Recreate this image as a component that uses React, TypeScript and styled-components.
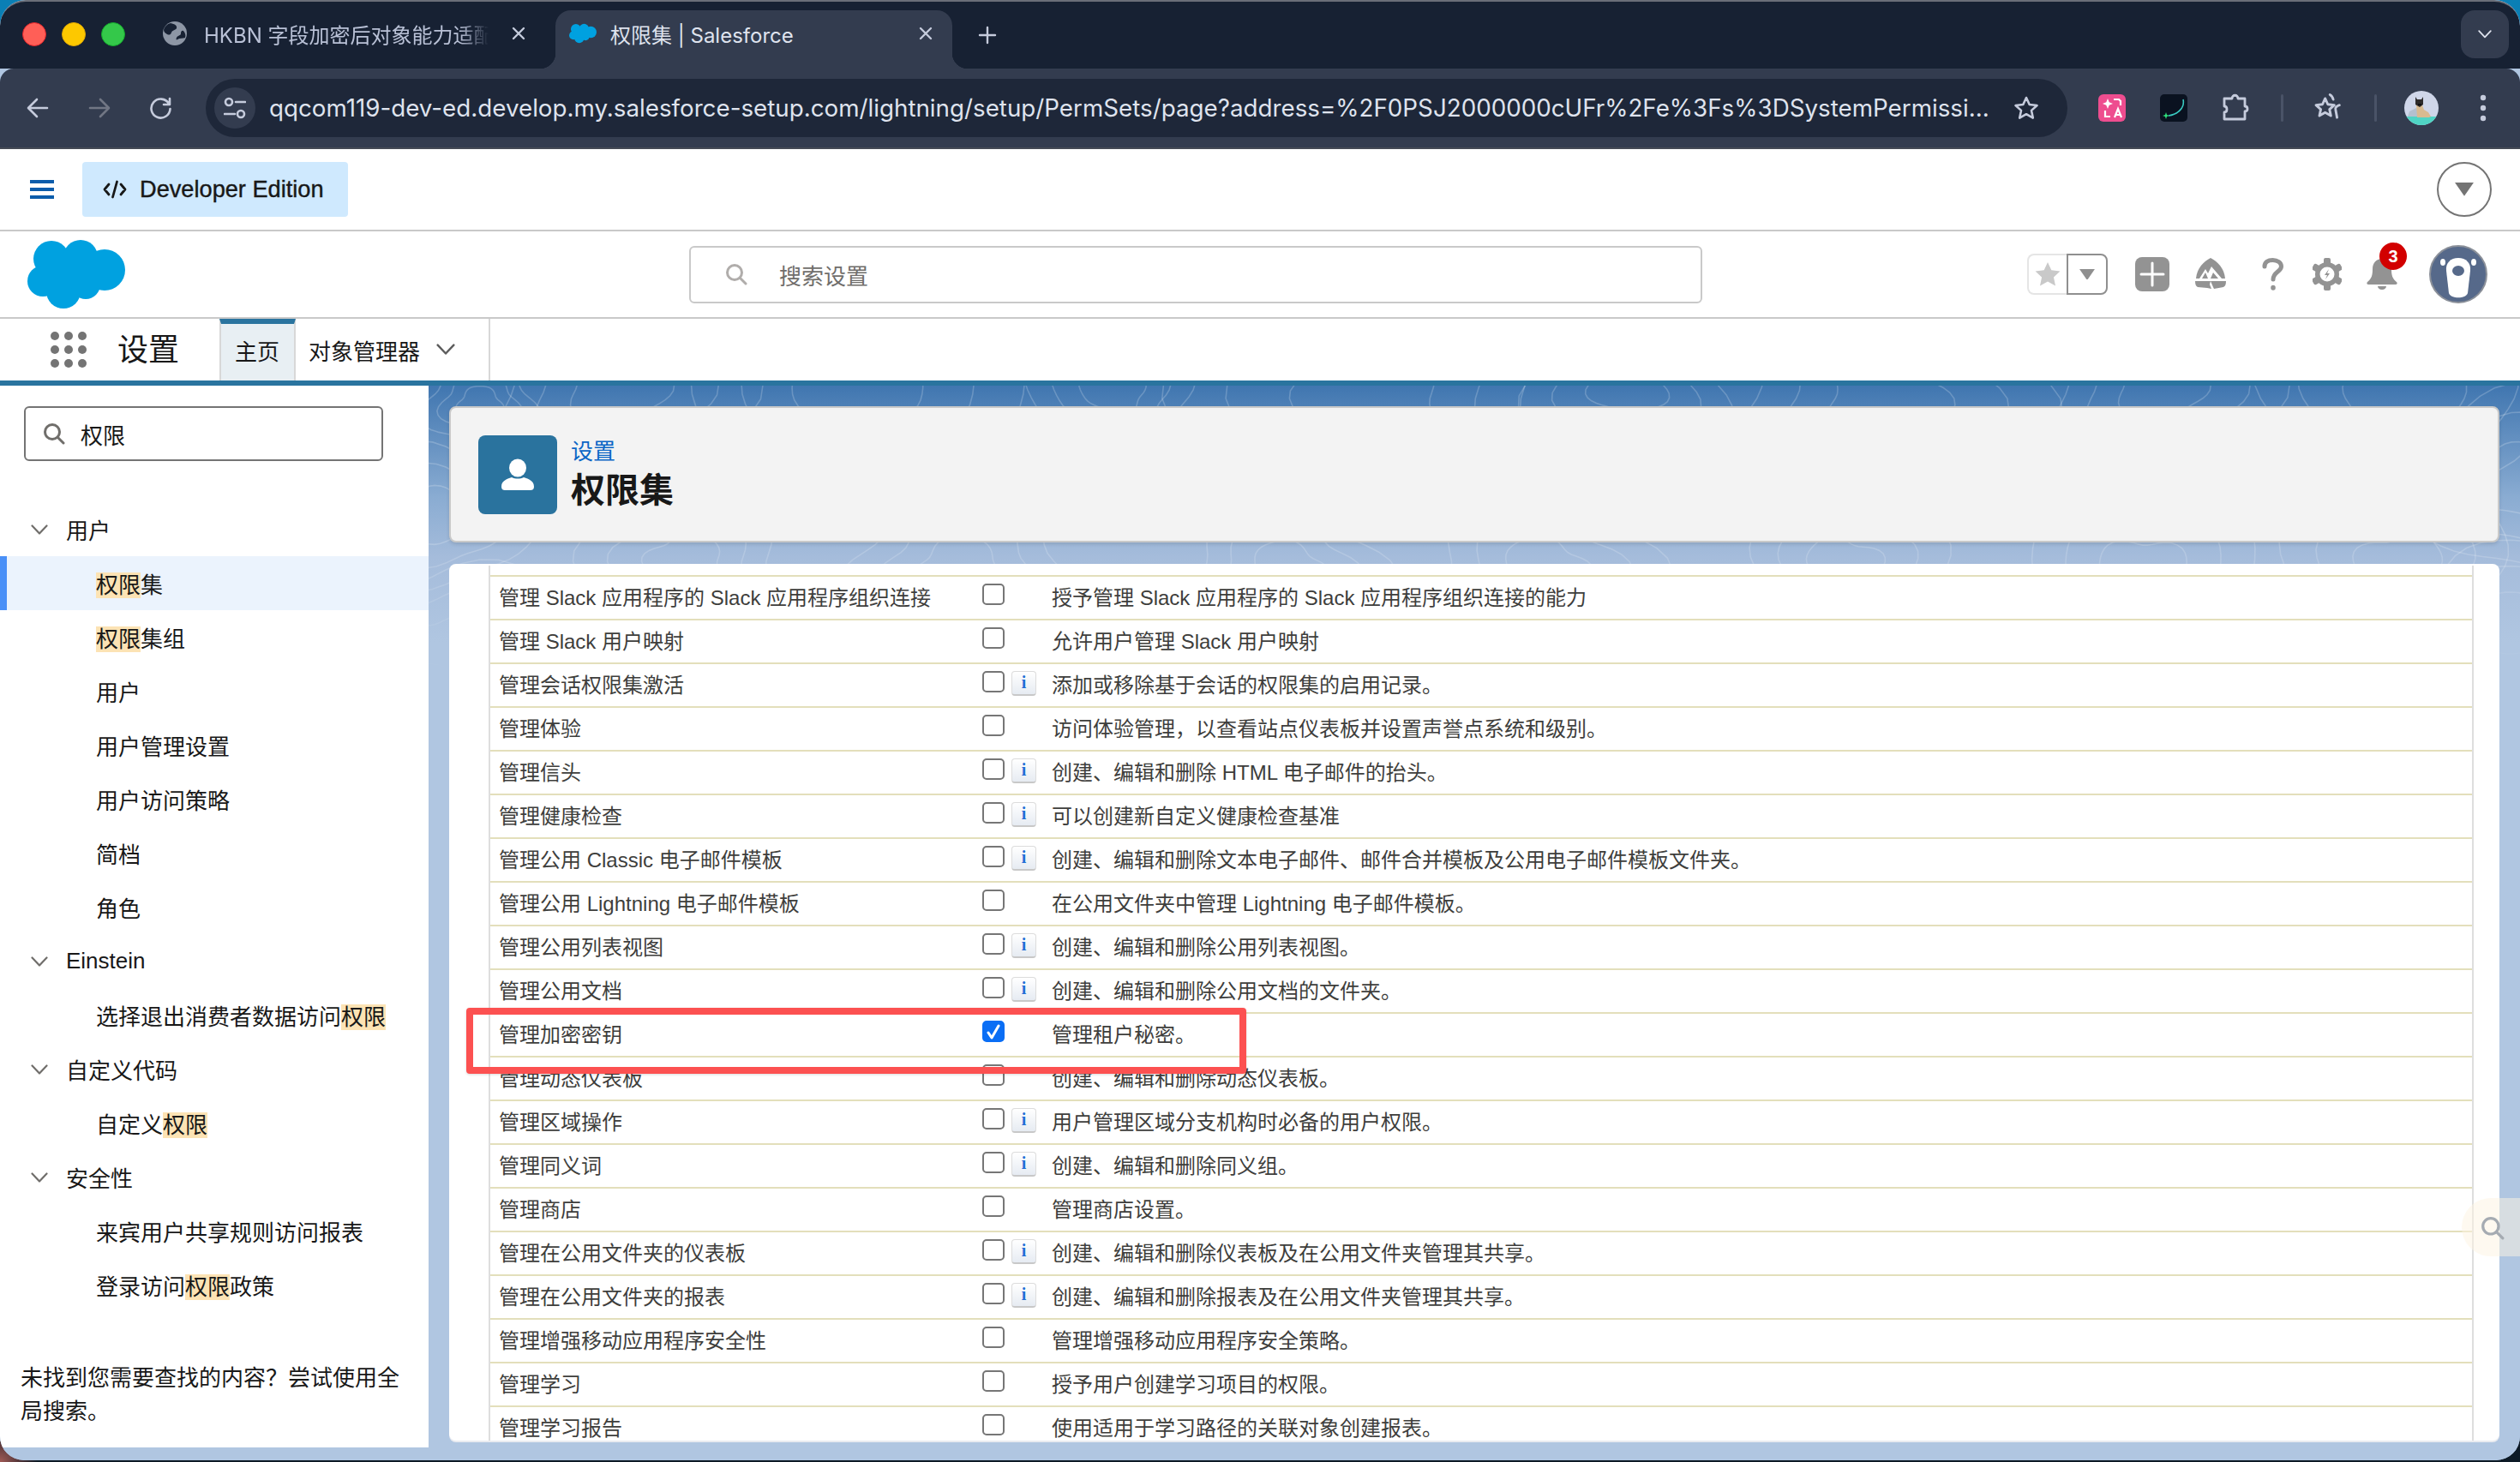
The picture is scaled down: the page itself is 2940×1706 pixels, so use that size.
import React from "react";
import styled, { createGlobalStyle } from "styled-components";

const FONT = `"Liberation Sans", "Noto Sans CJK SC", sans-serif`;
const UI_FONT = `Inter, "Noto Sans CJK SC", sans-serif`;

const Global = createGlobalStyle`
  html, body { margin: 0; padding: 0; width: 2940px; height: 1706px; overflow: hidden; }
  body {
    font-family: ${FONT};
    background:
      radial-gradient(circle at 0 0, #0a7fb5 0, #0a7fb5 30px, transparent 40px),
      radial-gradient(circle at 100% 0, #0a7fb5 0, #0a7fb5 30px, transparent 40px),
      radial-gradient(circle at 0 100%, #a05a55 0, #3a2a30 30px, transparent 44px),
      #0d1a26;
  }
  * { box-sizing: border-box; }
`;

const Window = styled.div`
  position: relative;
  width: 2940px;
  height: 1704px;
  border-radius: 30px 30px 28px 28px;
  overflow: hidden;
  display: flex;
  flex-direction: column;
  background: #b0c6e1;
`;

/* ---------- browser chrome ---------- */
const TabBar = styled.div`
  height: 80px;
  flex: none;
  display: flex;
  align-items: flex-end;
  padding-left: 26px;
  background: #172133;
  border-top: 2px solid #6a6e78;
  border-radius: 30px 30px 0 0;
`;
const Lights = styled.div`
  display: flex;
  gap: 18px;
  align-self: flex-start;
  margin-top: 24px;
`;
const Light = styled.span<{ $c: string; $b: string }>`
  width: 28px;
  height: 28px;
  border-radius: 50%;
  background: ${(p) => p.$c};
  border: 1px solid ${(p) => p.$b};
`;
const Tab = styled.div<{ $active?: boolean }>`
  position: relative;
  height: 68px;
  display: flex;
  align-items: center;
  width: ${(p) => (p.$active ? 463 : 456)}px;
  margin-left: ${(p) => (p.$active ? 18 : 28)}px;
  padding: 0 ${(p) => (p.$active ? 22 : 16)}px 14px 16px;
  border-radius: 18px 18px 0 0;
  background: ${(p) => (p.$active ? "#333c4f" : "transparent")};
  color: ${(p) => (p.$active ? "#dfe3ee" : "#b9c1d6")};
  font: 24px ${UI_FONT};
  ${(p) =>
    p.$active &&
    `
    &::before, &::after {
      content: ""; position: absolute; bottom: 0; width: 18px; height: 18px;
    }
    &::before { left: -18px; background: radial-gradient(circle at 0 0, transparent 18px, #333c4f 18.5px); }
    &::after { right: -18px; background: radial-gradient(circle at 100% 0, transparent 18px, #333c4f 18.5px); }
  `}
`;
const TabTitle = styled.span<{ $fade?: boolean }>`
  flex: 1;
  margin: 0 ${(p) => (p.$fade ? 26 : 0)}px 0 ${(p) => (p.$fade ? 20 : 16)}px;
  overflow: hidden;
  white-space: nowrap;
  ${(p) => p.$fade && `mask-image: linear-gradient(90deg, #000 90%, transparent 100%);`}
`;
const NewTab = styled.span`
  align-self: center;
  margin: 0 0 0 24px;
  width: 34px;
  height: 34px;
  display: flex;
  align-items: center;
  justify-content: center;
`;
const TabMenu = styled.span`
  align-self: flex-start;
  margin: 10px 13px 0 auto;
  width: 56px;
  height: 56px;
  border-radius: 16px;
  background: #333c4f;
  display: flex;
  align-items: center;
  justify-content: center;
`;
const Toolbar = styled.div`
  height: 94px;
  flex: none;
  display: flex;
  align-items: center;
  padding: 0 0 0 8px;
  background: #333c4f;
  border-bottom: 2px solid #454a55;
  border-radius: 16px 16px 0 0;
`;
const ToolButton = styled.span<{ $gap?: number }>`
  width: 72px;
  flex: none;
  display: flex;
  align-items: center;
  justify-content: center;
  margin-left: ${(p) => p.$gap ?? 0}px;
`;
const ToolSep = styled.span<{ $gap: number }>`
  width: 3px;
  height: 32px;
  border-radius: 2px;
  background: #4a5367;
  margin-left: ${(p) => p.$gap}px;
`;
const AddressBar = styled.div`
  width: 2172px;
  height: 68px;
  margin-left: 16px;
  border-radius: 34px;
  background: #1e2739;
  display: flex;
  align-items: center;
  padding: 0 32px 0 10px;
`;
const SiteInfo = styled.span`
  width: 48px;
  height: 48px;
  flex: none;
  border-radius: 50%;
  background: #333c4f;
  display: flex;
  align-items: center;
  justify-content: center;
`;
const Url = styled.span`
  flex: 1;
  margin-left: 16px;
  font: 27.75px ${UI_FONT};
  color: #dfe3ee;
  white-space: nowrap;
  overflow: hidden;
`;

/* ---------- salesforce top rows ---------- */
const DevRow = styled.div`
  height: 96px;
  flex: none;
  background: #fff;
  border-bottom: 2px solid #c9c9c9;
  display: flex;
  align-items: center;
  padding: 0 33px 0 35px;
`;
const Hamburger = styled.span`
  width: 28px;
  height: 22px;
  display: flex;
  flex-direction: column;
  justify-content: space-between;
  & > i { display: block; height: 4px; background: #0b5cab; }
`;
const EditionBadge = styled.div`
  margin-left: 33px;
  width: 310px;
  height: 64px;
  background: #cfe9fe;
  border-radius: 4px;
  display: flex;
  align-items: center;
  padding-left: 24px;
  gap: 15px;
  font: 500 27.2px ${FONT};
  color: #181818;
  -webkit-text-stroke: 0.4px #181818;
`;
const RoundButton = styled.span`
  margin-left: auto;
  width: 64px;
  height: 64px;
  border: 2px solid #747474;
  border-radius: 50%;
  display: flex;
  align-items: center;
  justify-content: center;
`;
const Header = styled.div`
  height: 102px;
  flex: none;
  background: #fff;
  border-bottom: 2px solid #c9c9c9;
  display: grid;
  grid-template-columns: 804px 1182px 1fr;
  align-items: center;
`;
const Logo = styled.div`
  padding-left: 32px;
  display: flex;
`;
const GlobalSearch = styled.div`
  height: 67px;
  border: 2px solid #c9c9c9;
  border-radius: 6px;
  display: flex;
  align-items: center;
  padding-left: 40px;
  gap: 37px;
  font-size: 26px;
  color: #706e6b;
`;
const HeaderTools = styled.div`
  display: flex;
  justify-content: flex-end;
  align-items: center;
  padding-right: 38px;
`;
const HeaderTool = styled.span<{ $gap: number }>`
  position: relative;
  display: flex;
  margin-left: ${(p) => p.$gap}px;
`;
const FavGroup = styled.div`
  display: flex;
  height: 48px;
`;
const FavStar = styled.span`
  width: 46px;
  border: 2px solid #e5e5e5;
  border-right: 0;
  border-radius: 8px 0 0 8px;
  display: flex;
  align-items: center;
  justify-content: center;
`;
const FavMenu = styled.span`
  width: 48px;
  border: 2px solid #8f8f8f;
  border-radius: 0 8px 8px 0;
  display: flex;
  align-items: center;
  justify-content: center;
`;
const NotifBadge = styled.span`
  position: absolute;
  top: -18px;
  right: -10px;
  width: 32px;
  height: 32px;
  border-radius: 50%;
  background: #d20000;
  color: #fff;
  font: 700 20px ${FONT};
  display: flex;
  align-items: center;
  justify-content: center;
`;
const NavRow = styled.div`
  height: 72px;
  flex: none;
  background: #fff;
  display: flex;
  align-items: stretch;
`;
const AppGrid = styled.div`
  margin: 15px 0 0 59px;
  width: 42px;
  height: 42px;
  display: grid;
  grid-template-columns: repeat(3, 10px);
  grid-auto-rows: 10px;
  gap: 6px;
  & > i { border-radius: 50%; background: #747474; }
`;
const AppName = styled.div`
  margin-left: 36px;
  width: 119px;
  font-size: 36px;
  line-height: 74px;
  color: #181818;
`;
const NavTab = styled.div<{ $active?: boolean }>`
  display: flex;
  align-items: center;
  gap: 19px;
  font-size: 26px;
  color: #181818;
  padding: ${(p) => (p.$active ? "0 0 6px 16px" : "0 0 0 15px")};
  width: ${(p) => (p.$active ? 89 : 227)}px;
  border-right: 2px solid #d8d8d8;
  ${(p) =>
    p.$active &&
    `background: #e8eff3; border-top: 6px solid #2a749f; border-left: 2px solid #d8d8d8;`}
`;
const Strip = styled.div`
  height: 6px;
  flex: none;
  background: #2a749f;
`;

/* ---------- workspace ---------- */
const Workspace = styled.div`
  position: relative;
  flex: 1;
  min-height: 0;
  display: flex;
  background: linear-gradient(180deg, #4076b0 0, #8aacd2 130px, #a5bcdb 200px, #b0c6e1 300px);
`;
const Contours = styled.svg`
  position: absolute;
  left: 0;
  top: 0;
  mask-image: linear-gradient(180deg, #000 0, #000 180px, transparent 340px);
`;
const Sidebar = styled.aside`
  position: relative;
  width: 500px;
  height: 1239px;
  flex: none;
  background: #fff;
  padding-top: 24px;
  display: flex;
  flex-direction: column;
`;
const SideSearch = styled.div`
  margin-left: 28px;
  width: 419px;
  height: 64px;
  border: 2px solid #747474;
  border-radius: 6px;
  display: flex;
  align-items: center;
  padding-left: 20px;
  gap: 18px;
  font-size: 26px;
  color: #181818;
`;
const Tree = styled.div`
  margin-top: 48px;
`;
const GroupRow = styled.div`
  height: 63px;
  display: flex;
  align-items: center;
  padding-left: 36px;
  gap: 21px;
  font-size: 26px;
  color: #181818;
`;
const ItemRow = styled.div<{ $active?: boolean }>`
  height: 63px;
  display: flex;
  align-items: center;
  padding-left: 112px;
  font-size: 26px;
  color: #181818;
  ${(p) => p.$active && `background: #ebf3fd; border-left: 8px solid #4a90f7; padding-left: 104px;`}
`;
const Hit = styled.span`
  background: #fce3b4;
`;
const SideNote = styled.p`
  margin: auto 24px 22px;
  font-size: 26px;
  line-height: 39px;
  color: #181818;
`;
const Main = styled.main`
  position: relative;
  flex: 1;
  padding: 24px 24px 23px;
  display: flex;
  flex-direction: column;
  gap: 25px;
`;
const PageHeader = styled.section`
  height: 159px;
  flex: none;
  border: 2px solid #c9c9c9;
  border-radius: 8px;
  background: #f3f3f3;
  box-shadow: 0 2px 4px rgba(0, 0, 0, 0.12);
  display: flex;
  align-items: center;
  padding: 0 0 0 32px;
  gap: 16px;
`;
const PageIcon = styled.span`
  width: 92px;
  height: 92px;
  border-radius: 8px;
  background: #2a739e;
  display: flex;
  align-items: center;
  justify-content: center;
`;
const Crumb = styled.div`
  font-size: 26px;
  line-height: 30px;
  color: #0b66c6;
`;
const PageTitle = styled.h1`
  margin: 6px 0 0;
  font-size: 40px;
  line-height: 48px;
  font-weight: 700;
  color: #181818;
`;
const TableCard = styled.section`
  flex: 1;
  min-height: 0;
  background: #fff;
  border-radius: 8px;
  overflow: hidden;
  padding: 2px 30px 0 46px;
  box-shadow: 0 2px 0 #e9ebf0;
`;
const PermTable = styled.div`
  height: 100%;
  padding-top: 11px;
  border-left: 2px solid #dedede;
  border-right: 2px solid #dedede;
  overflow: hidden;
`;
const PermRow = styled.div`
  height: 51px;
  display: grid;
  grid-template-columns: 574px 81px 1fr;
  border-top: 2px solid #e3dfbb;
  font-size: 24px;
  line-height: 49px;
  color: #3e3e3c;
`;
const PermName = styled.div`
  padding-left: 10px;
  white-space: nowrap;
`;
const PermControl = styled.div`
  display: flex;
  align-items: flex-start;
  padding-top: 8px;
  gap: 8px;
`;
const Check = styled.span<{ $on?: boolean }>`
  width: 26px;
  height: 25px;
  border-radius: 5px;
  border: 2px solid ${(p) => (p.$on ? "#0a6ef5" : "#767676")};
  background: ${(p) => (p.$on ? "#0a6ef5" : "#fff")};
  display: flex;
  align-items: center;
  justify-content: center;
`;
const InfoButton = styled.span`
  width: 29px;
  height: 29px;
  border: 1px solid #dcdcdc;
  border-bottom: 2px solid #c8c8c8;
  border-radius: 4px;
  background: linear-gradient(180deg, #fff, #e6ebf2);
  color: #1f6fd6;
  font: 700 20px/25px "Liberation Serif", serif;
  text-align: center;
`;
const PermDesc = styled.div`
  white-space: nowrap;
`;
const Annotation = styled.div`
  position: absolute;
  left: 544px;
  top: 1176px;
  width: 910px;
  height: 77px;
  border: 8px solid #fc5151;
  border-radius: 4px;
  box-shadow: 0 1px 3px rgba(0, 0, 0, 0.15);
  pointer-events: none;
`;
const FloatSearch = styled.div`
  position: absolute;
  right: 0;
  top: 1398px;
  width: 68px;
  height: 68px;
  border-radius: 34px 0 0 34px;
  background: rgba(253, 243, 225, 0.5);
  display: flex;
  align-items: center;
  padding: 2px 0 0 22px;
`;

/* ---------- drawings ---------- */
const Cloud = ({ w, h }: { w: number; h: number }) => (
  <svg width={w} height={h} viewBox="0 0 114 80" fill="#00a1e0">
    <circle cx="28" cy="22" r="21" />
    <circle cx="62" cy="20" r="20" />
    <circle cx="90" cy="35" r="24" />
    <circle cx="18" cy="48" r="18" />
    <circle cx="42" cy="60" r="20" />
    <circle cx="68" cy="52" r="17" />
    <rect x="20" y="20" width="72" height="36" />
  </svg>
);
const Magnifier = ({ size, color }: { size: number; color: string }) => (
  <svg width={size} height={size} viewBox="0 0 26 26" fill="none" stroke={color} strokeWidth="3" strokeLinecap="round">
    <circle cx="11" cy="11" r="8.5" />
    <path d="M17.5 17.5 24 24" />
  </svg>
);
const Chevron = ({ size = 22, color = "#706e6b" }: { size?: number; color?: string }) => (
  <svg width={size} height={size * 0.6} viewBox="0 0 20 12" fill="none" stroke={color} strokeWidth="2.2" strokeLinecap="round" strokeLinejoin="round">
    <path d="M1.5 1.5 10 10.5 18.5 1.5" />
  </svg>
);
const Caret = ({ w, color }: { w: number; color: string }) => (
  <svg width={w} height={w * 0.72} viewBox="0 0 18 13" fill={color}>
    <path d="M0 0h18L9 13z" />
  </svg>
);
const CloseX = () => (
  <svg width="18" height="18" viewBox="0 0 18 18" stroke="#c5cbdc" strokeWidth="2.4" strokeLinecap="round">
    <path d="M3 3l12 12M15 3 3 15" />
  </svg>
);
const GlobeFav = () => (
  <svg width="28" height="28" viewBox="0 0 28 28">
    <circle cx="14" cy="14" r="14" fill="#8d96a5" />
    <path d="M9 2c5 1 8 3 7 6-1 2-5 2-6 5s-3 3-5 2-4-3-4-5c1-4 4-7 8-8zM24 11c2 2 3 5 2 8-3 1-6 0-9 2-1 1-2 0-1-2 1-3 5-2 5-5 0-2 1-4 3-3z" fill="#172133" />
  </svg>
);
const StrokeIcon = styled.svg<{ $dim?: boolean }>`
  fill: none;
  stroke: ${(p) => (p.$dim ? "#717684" : "#c5cbdc")};
  stroke-width: 2.6;
  stroke-linecap: round;
  stroke-linejoin: round;
  display: block;
`;
const Star = ({ size }: { size: number }) => (
  <StrokeIcon width={size} height={size} viewBox="0 0 32 32">
    <path d="M16 4l3.7 8 8.8 1-6.5 5.9 1.8 8.7L16 23.2 8.2 27.6 10 18.9 3.5 13l8.8-1z" />
  </StrokeIcon>
);
const Translate = () => (
  <svg width="32" height="32" viewBox="0 0 32 32">
    <rect width="32" height="32" rx="6" fill="#ee4d8f" />
    <path d="M11 5l1.7 4.3L17 11l-4.3 1.7L11 17l-1.7-4.3L5 11l4.3-1.7z" fill="#fff" />
    <path d="M18 6h6l2 2v5M8 19v7h6M19 27l4-10 4 10M20.5 24h5" stroke="#fff" strokeWidth="2.2" fill="none" />
  </svg>
);
const Comet = () => (
  <svg width="32" height="32" viewBox="0 0 32 32">
    <rect width="32" height="32" rx="5" fill="#0a1220" />
    <path d="M27 6c2 9-5 17-17 19" stroke="#39c9c0" strokeWidth="1.6" fill="none" />
    <path d="M7 21l1 3 3 1-3 1-1 3-1-3-3-1 3-1z" fill="#2ee07a" />
  </svg>
);
const Puzzle = () => (
  <StrokeIcon width="32" height="34" viewBox="0 0 32 34">
    <path d="M3 6h9c0-5 7-5 7 0h8v9c4 0 4 6 0 6v9H3v-8c4 0 4-7 0-7z" strokeWidth="2.8" />
  </StrokeIcon>
);
const StarList = () => (
  <StrokeIcon width="40" height="38" viewBox="0 0 36 34">
    <path d="M15 7l2.8 6.2 6.8.8-5 4.5 1.4 6.7-6-3.4-6 3.4 1.4-6.7-5-4.5 6.800-.8zM20 3c2 1 3 3 3.500 5M30 14c-3 1-5 3-4 5l1.500 8" />
  </StrokeIcon>
);
const CatAvatar = () => (
  <svg width="40" height="40" viewBox="0 0 40 40">
    <defs>
      <clipPath id="cat"><circle cx="20" cy="20" r="20" /></clipPath>
    </defs>
    <g clipPath="url(#cat)">
      <rect width="40" height="40" fill="#cfd6e9" />
      <path d="M0 30h40v10H0z" fill="#50d4c4" />
      <path d="M6 24l8-4 6 10H4z" fill="#b4c0cf" />
      <path d="M14 17h7l2 5 5 3 3 5-2 1H15z" fill="#d8ba90" />
      <path d="M13 7l2 3h5l2-3v9l-4 3-5-3z" fill="#2d2a2a" />
      <path d="M16 15h4v2h-4z" fill="#111" />
    </g>
  </svg>
);
const Bear = () => (
  <svg width="68" height="68" viewBox="0 0 68 68">
    <circle cx="34" cy="34" r="33" fill="#56698a" stroke="#8b9099" strokeWidth="2" />
    <ellipse cx="16" cy="20" rx="3" ry="4" fill="#fff" />
    <ellipse cx="52" cy="20" rx="3" ry="4" fill="#fff" />
    <path d="M34 15c-9 0-15 6-14 15l3 26c2 7 20 7 22 0l3-26c1-9-5-15-14-15z" fill="#fff" />
    <ellipse cx="34" cy="30" rx="7" ry="6" fill="#56698a" />
  </svg>
);

type Blob = [number, number, number, number];
const BLOBS: Blob[] = [
  [560, 20, 40, 0], [720, 0, 90, 1], [520, 150, 70, 2], [1000, 10, 120, 3], [1300, 5, 60, 4],
  [1600, 15, 130, 5], [1900, 0, 70, 6], [2200, 15, 110, 7], [2520, 0, 80, 1], [2800, 15, 110, 2],
  [520, 310, 90, 4], [800, 205, 70, 5], [1120, 215, 80, 6], [1500, 215, 70, 7],
  [1800, 215, 80, 1], [2150, 210, 70, 2], [2500, 215, 80, 3], [2800, 210, 80, 4], [2930, 110, 90, 5],
  [2930, 280, 80, 6], [500, 400, 60, 1],
];
const contourPath = ([cx, cy, r, seed]: Blob, k: number) => {
  const pts: string[] = [];
  const rr = r * (0.45 + k * 0.35);
  for (let i = 0; i <= 48; i++) {
    const a = (i / 48) * Math.PI * 2;
    const w = 1 + 0.14 * Math.sin(a * 3 + seed) + 0.06 * Math.sin(a * 5 + seed * 2);
    pts.push(`${(cx + rr * 1.4 * w * Math.cos(a)).toFixed(1)} ${(cy + rr * w * Math.sin(a)).toFixed(1)}`);
  }
  return "M" + pts.join("L") + "Z";
};

/* ---------- data ---------- */
type Perm = { name: string; desc: string; info?: boolean; on?: boolean };
const PERMS: Perm[] = [
  { name: "管理 Slack 应用程序的 Slack 应用程序组织连接", desc: "授予管理 Slack 应用程序的 Slack 应用程序组织连接的能力" },
  { name: "管理 Slack 用户映射", desc: "允许用户管理 Slack 用户映射" },
  { name: "管理会话权限集激活", desc: "添加或移除基于会话的权限集的启用记录。", info: true },
  { name: "管理体验", desc: "访问体验管理，以查看站点仪表板并设置声誉点系统和级别。" },
  { name: "管理信头", desc: "创建、编辑和删除 HTML 电子邮件的抬头。", info: true },
  { name: "管理健康检查", desc: "可以创建新自定义健康检查基准", info: true },
  { name: "管理公用 Classic 电子邮件模板", desc: "创建、编辑和删除文本电子邮件、邮件合并模板及公用电子邮件模板文件夹。", info: true },
  { name: "管理公用 Lightning 电子邮件模板", desc: "在公用文件夹中管理 Lightning 电子邮件模板。" },
  { name: "管理公用列表视图", desc: "创建、编辑和删除公用列表视图。", info: true },
  { name: "管理公用文档", desc: "创建、编辑和删除公用文档的文件夹。", info: true },
  { name: "管理加密密钥", desc: "管理租户秘密。", on: true },
  { name: "管理动态仪表板", desc: "创建、编辑和删除动态仪表板。" },
  { name: "管理区域操作", desc: "用户管理区域分支机构时必备的用户权限。", info: true },
  { name: "管理同义词", desc: "创建、编辑和删除同义组。", info: true },
  { name: "管理商店", desc: "管理商店设置。" },
  { name: "管理在公用文件夹的仪表板", desc: "创建、编辑和删除仪表板及在公用文件夹管理其共享。", info: true },
  { name: "管理在公用文件夹的报表", desc: "创建、编辑和删除报表及在公用文件夹管理其共享。", info: true },
  { name: "管理增强移动应用程序安全性", desc: "管理增强移动应用程序安全策略。" },
  { name: "管理学习", desc: "授予用户创建学习项目的权限。" },
  { name: "管理学习报告", desc: "使用适用于学习路径的关联对象创建报表。" },
];
type Node = { label: string; group?: boolean; active?: boolean };
const TREE: Node[] = [
  { label: "用户", group: true },
  { label: "权限集", active: true },
  { label: "权限集组" },
  { label: "用户" },
  { label: "用户管理设置" },
  { label: "用户访问策略" },
  { label: "简档" },
  { label: "角色" },
  { label: "Einstein", group: true },
  { label: "选择退出消费者数据访问权限" },
  { label: "自定义代码", group: true },
  { label: "自定义权限" },
  { label: "安全性", group: true },
  { label: "来宾用户共享规则访问报表" },
  { label: "登录访问权限政策" },
];
const Highlighted = ({ text }: { text: string }) => {
  const [a, b] = text.split("权限");
  return text.includes("权限") ? (
    <span>
      {a}
      <Hit>权限</Hit>
      {b}
    </span>
  ) : (
    <span>{text}</span>
  );
};

export default function App() {
  return (
    <>
      <Global />
      <Window>
        <TabBar>
          <Lights>
            <Light $c="#ff5f57" $b="#e0242a" />
            <Light $c="#fdc800" $b="#e0a800" />
            <Light $c="#34c84a" $b="#14a82c" />
          </Lights>
          <Tab>
            <GlobeFav />
            <TabTitle $fade>HKBN 字段加密后对象能力适配</TabTitle>
            <CloseX />
          </Tab>
          <Tab $active>
            <Cloud w={32} h={26} />
            <TabTitle>权限集 | Salesforce</TabTitle>
            <CloseX />
          </Tab>
          <NewTab>
            <svg width="24" height="24" viewBox="0 0 24 24" stroke="#c5cbdc" strokeWidth="2.4" strokeLinecap="round">
              <path d="M12 3v18M3 12h18" />
            </svg>
          </NewTab>
          <TabMenu>
            <Chevron size={16} color="#dfe3ee" />
          </TabMenu>
        </TabBar>
        <Toolbar>
          <ToolButton>
            <StrokeIcon width="26" height="26" viewBox="0 0 26 26">
              <path d="M24 13H3M12 3 2 13l10 10" />
            </StrokeIcon>
          </ToolButton>
          <ToolButton>
            <StrokeIcon $dim width="26" height="26" viewBox="0 0 26 26">
              <path d="M2 13h21M14 3l10 10-10 10" />
            </StrokeIcon>
          </ToolButton>
          <ToolButton>
            <StrokeIcon width="26" height="26" viewBox="0 0 26 26">
              <path d="M22 8a11 11 0 1 0 1.5 6M23 2v7h-7" />
            </StrokeIcon>
          </ToolButton>
          <AddressBar>
            <SiteInfo>
              <StrokeIcon width="26" height="26" viewBox="0 0 26 26">
                <circle cx="6" cy="6" r="4" />
                <circle cx="20" cy="20" r="4" />
                <path d="M14 6h11M1 20h12" />
              </StrokeIcon>
            </SiteInfo>
            <Url>qqcom119-dev-ed.develop.my.salesforce-setup.com/lightning/setup/PermSets/page?address=%2F0PSJ2000000cUFr%2Fe%3Fs%3DSystemPermissi...</Url>
            <Star size={32} />
          </AddressBar>
          <ToolButton $gap={16}>
            <Translate />
          </ToolButton>
          <ToolButton>
            <Comet />
          </ToolButton>
          <ToolButton>
            <Puzzle />
          </ToolButton>
          <ToolSep $gap={17} />
          <ToolButton $gap={16}>
            <StarList />
          </ToolButton>
          <ToolSep $gap={18} />
          <ToolButton $gap={16}>
            <CatAvatar />
          </ToolButton>
          <ToolButton>
            <svg width="12" height="34" viewBox="0 0 12 34" fill="#c5cbdc">
              <circle cx="6" cy="5" r="3.2" />
              <circle cx="6" cy="17" r="3.2" />
              <circle cx="6" cy="29" r="3.2" />
            </svg>
          </ToolButton>
        </Toolbar>

        <DevRow>
          <Hamburger>
            <i />
            <i />
            <i />
          </Hamburger>
          <EditionBadge>
            <svg width="28" height="24" viewBox="0 0 28 24" fill="none" stroke="#181818" strokeWidth="2.8" strokeLinecap="round" strokeLinejoin="round">
              <path d="M7 6 2 12l5 6M21 6l5 6-5 6M16.5 3l-5 18" />
            </svg>
            Developer Edition
          </EditionBadge>
          <RoundButton>
            <Caret w={22} color="#747474" />
          </RoundButton>
        </DevRow>
        <Header>
          <Logo>
            <Cloud w={114} h={80} />
          </Logo>
          <GlobalSearch>
            <Magnifier size={26} color="#b0adab" />
            搜索设置
          </GlobalSearch>
          <HeaderTools>
            <FavGroup>
              <FavStar>
                <svg width="30" height="30" viewBox="0 0 32 32" fill="#c9c9c9">
                  <path d="M16 1l4.6 10 10.8 1.2-8 7.4 2.2 10.8L16 25l-9.6 5.4 2.2-10.8-8-7.4L11.4 11z" />
                </svg>
              </FavStar>
              <FavMenu>
                <Caret w={18} color="#8f8f8f" />
              </FavMenu>
            </FavGroup>
            <HeaderTool $gap={32}>
              <svg width="40" height="40" viewBox="0 0 40 40">
                <rect width="40" height="40" rx="8" fill="#939393" />
                <path d="M20 7v26M7 20h26" stroke="#fff" strokeWidth="3" strokeLinecap="round" />
              </svg>
            </HeaderTool>
            <HeaderTool $gap={29}>
              <svg width="38" height="38" viewBox="0 0 38 38" fill="#939393">
                <path d="M19 0c8 4 16 12 17 24H2C3 12 11 4 19 0z" />
                <path d="M1 27h36c0 4-1 6-3 7l-11 2-1-2-3-7-1 4 2 5-5-1L4 34c-2-1-3-3-3-7z" />
                <path d="M6 24l7-11 3 5 4-8 12 14h-4l-6-7-3 7h-3l-3-7-4 7z" fill="#fff" />
              </svg>
            </HeaderTool>
            <HeaderTool $gap={41}>
              <svg width="25" height="38" viewBox="0 0 25 38" fill="none" stroke="#939393" strokeWidth="5" strokeLinecap="round">
                <path d="M3 10c0-5 4-7.500 9.500-7.500S22.500 5.500 22.500 10c0 6-9.500 6.500-9.500 15" />
                <path d="M13 34.500v.5" strokeWidth="5.500" />
              </svg>
            </HeaderTool>
            <HeaderTool $gap={34}>
              <svg width="34" height="38" viewBox="0 0 34 38">
                <g fill="#939393">
                  <circle cx="17" cy="19" r="14" />
                  <rect x="13" y="0" width="8" height="8" rx="2" />
                  <rect x="13" y="30" width="8" height="8" rx="2" />
                  <rect x="13" y="0" width="8" height="8" rx="2" transform="rotate(60 17 19)" />
                  <rect x="13" y="0" width="8" height="8" rx="2" transform="rotate(120 17 19)" />
                  <rect x="13" y="0" width="8" height="8" rx="2" transform="rotate(240 17 19)" />
                  <rect x="13" y="0" width="8" height="8" rx="2" transform="rotate(300 17 19)" />
                </g>
                <circle cx="17" cy="19" r="8.500" fill="#fff" />
                <path d="M19 13l-5 7h3l-2 5 5-7h-3z" fill="#939393" />
              </svg>
            </HeaderTool>
            <HeaderTool $gap={28}>
              <svg width="38" height="38" viewBox="0 0 38 38" fill="#939393">
                <path d="M19 1c-7 0-11 5-11 12 0 7-1 11-6 15-1 1-1 3 1 3h32c2 0 2-2 1-3-5-4-6-8-6-15C30 6 26 1 19 1z" />
                <path d="M14 33h10c0 2-2 4-5 4s-5-2-5-4z" />
              </svg>
              <NotifBadge>3</NotifBadge>
            </HeaderTool>
            <HeaderTool $gap={36}>
              <Bear />
            </HeaderTool>
          </HeaderTools>
        </Header>
        <NavRow>
          <AppGrid>
            {Array.from({ length: 9 }).map((_, i) => (
              <i key={i} />
            ))}
          </AppGrid>
          <AppName>设置</AppName>
          <NavTab $active>主页</NavTab>
          <NavTab>
            对象管理器
            <Chevron size={22} color="#5c5c5c" />
          </NavTab>
        </NavRow>
        <Strip />

        <Workspace>
          <Contours width="2940" height="500" viewBox="0 0 2940 500" fill="none" stroke="rgba(255,255,255,.2)" strokeWidth="1.6">
            {BLOBS.flatMap((b, i) => [0, 1, 2].map((k) => <path key={`${i}-${k}`} d={contourPath(b, k)} />))}
          </Contours>
          <Sidebar>
            <SideSearch>
              <Magnifier size={26} color="#706e6b" />
              权限
            </SideSearch>
            <Tree>
              {TREE.map((n, i) =>
                n.group ? (
                  <GroupRow key={i}>
                    <Chevron size={20} />
                    {n.label}
                  </GroupRow>
                ) : (
                  <ItemRow key={i} $active={n.active}>
                    <Highlighted text={n.label} />
                  </ItemRow>
                )
              )}
            </Tree>
            <SideNote>未找到您需要查找的内容？尝试使用全局搜索。</SideNote>
          </Sidebar>
          <Main>
            <PageHeader>
              <PageIcon>
                <svg width="38" height="38" viewBox="0 0 38 38" fill="#fff">
                  <ellipse cx="19" cy="11" rx="10" ry="10.500" />
                  <path d="M0 33c0-7 6-9 12-11 4 2 10 2 14 0 6 2 12 4 12 11 0 3-2 4-4 4H4c-2 0-4-1-4-4z" />
                </svg>
              </PageIcon>
              <div>
                <Crumb>设置</Crumb>
                <PageTitle>权限集</PageTitle>
              </div>
            </PageHeader>
            <TableCard>
              <PermTable>
                {PERMS.map((p) => (
                  <PermRow key={p.name}>
                    <PermName>{p.name}</PermName>
                    <PermControl>
                      <Check $on={p.on}>
                        {p.on && (
                          <svg width="16" height="18" viewBox="0 0 16 18" fill="none" stroke="#fff" strokeWidth="3" strokeLinecap="round" strokeLinejoin="round">
                            <path d="M2 10l4 6L14 2" />
                          </svg>
                        )}
                      </Check>
                      {p.info && <InfoButton>i</InfoButton>}
                    </PermControl>
                    <PermDesc>{p.desc}</PermDesc>
                  </PermRow>
                ))}
              </PermTable>
            </TableCard>
          </Main>
        </Workspace>
        <Annotation />
        <FloatSearch>
          <Magnifier size={28} color="#a5abb2" />
        </FloatSearch>
      </Window>
    </>
  );
}
